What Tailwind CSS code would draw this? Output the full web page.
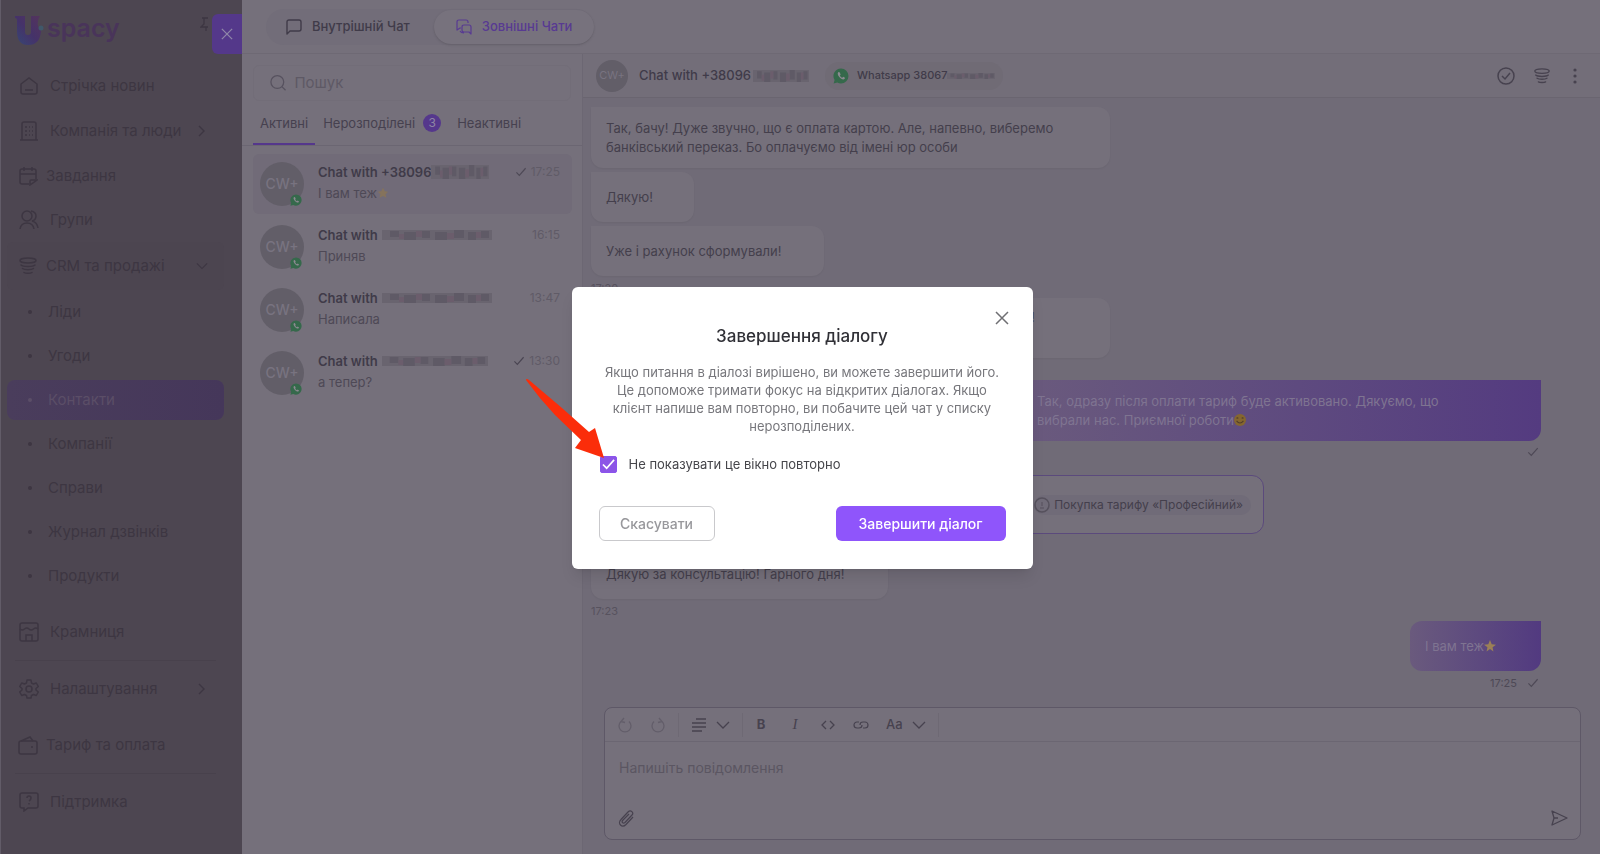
<!DOCTYPE html>
<html lang="uk">
<head>
    <meta charset="UTF-8">
    <meta name="viewport" content="width=device-width, initial-scale=1.0">
    <title>Uspacy - Зовнішні чати</title>
    <script src="https://cdn.jsdelivr.net/npm/@tailwindcss/browser@4"></script>
</head>
<body class="bg-[#75707b] text-[#403b49] font-['Inter','Noto_Sans',sans-serif] text-sm">
    <!-- Icon sprite -->
    <svg class="hidden">
        <symbol id="i-check" viewBox="0 0 14 12"><path d="M1.5 6.5 5 10 12.500 1.500" fill="none" stroke="currentColor" stroke-width="1.4"/></symbol>
        <symbol id="i-right" viewBox="0 0 12 16"><path d="M3 3l5 5-5 5" fill="none" stroke="currentColor" stroke-width="1.4"/></symbol>
        <symbol id="i-down" viewBox="0 0 14 10"><path d="M1 2l6 6 6-6" fill="none" stroke="currentColor" stroke-width="1.3"/></symbol>
        <symbol id="i-x" viewBox="0 0 14 14"><path d="M1 1l12 12M13 1 1 13" fill="none" stroke="currentColor" stroke-width="1.5"/></symbol>
        <symbol id="i-funnel" viewBox="0 0 20 20"><g fill="none" stroke="currentColor" stroke-width="1.5" stroke-linecap="round"><ellipse cx="10" cy="4.500" rx="8" ry="2.500"/><path d="M3 9c2 2 12 2 14 0M4.500 12.500c2 1.500 9 1.500 11 0M6 16.500c1.500 1 6.500 1 8 0"/></g></symbol>
        <symbol id="i-whatsapp" viewBox="0 0 16 16"><path d="M8 .500a7.500 7.500 0 0 1 0 15c-1.400 0-2.500-.300-3.700-1L.600 15.500l1-3.600A7.500 7.500 0 0 1 8 .500z" fill="#35694b"/><path d="M5.500 4c-1.300 1-1 2.900.800 5 1.900 2.200 4.200 3.300 5.400 1.700.300-.500.300-1-.100-1.200l-1.400-.700-.900.900c-1-.300-2-1.300-2.400-2.300l.700-.900-.700-1.800c-.300-.700-.900-1-1.400-.700z" fill="#8d8a92"/></symbol>
        <symbol id="i-mosaic" viewBox="0 0 110 10" preserveAspectRatio="none"><path fill="#69646f" d="M0 0h110v10H0z"/><path fill="#5f5a66" d="M8 1h9v6H8zM22 2h12v8H22zM40 1h8v7h-8zM53 2h12v8H53zM72 0h10v8H72zM86 2h8v8h-8zM99 1h8v7h-8z"/><path fill="#6b5d6c" d="M17 4h5v5h-5zM34 1h6v6h-6zM65 3h7v6h-7zM94 2h5v6h-5z"/></symbol>
    </svg>

    <div class="flex h-screen min-h-[854px]">
        <!-- Sidebar -->
        <aside class="w-[242px] shrink-0 bg-[#4d4651] text-[#3d3642] border-l border-[#625c68] text-[15px]">
            <div class="flex h-[64px] items-start justify-between">
                <a href="#" class="flex items-center pl-[13px] pt-3">
                    <svg class="h-8 w-8" viewBox="0 0 32 32">
                        <defs><linearGradient id="logo" x1="0" x2="1" y1="1" y2="0"><stop stop-color="#364775"/><stop offset=".5" stop-color="#453269"/><stop offset="1" stop-color="#54345c"/></linearGradient></defs>
                        <path d="M1 2h10v16q0 3 3 3t3-3V2h9q-3 5-2 10l3 5q-1 14-13 14Q3 31 3 17V6Q3 4 1 4z" fill="url(#logo)"/>
                        <circle cx="27" cy="14" r="2.500" fill="#40586a"/>
                    </svg>
                    <span class="pb-1 pl-px text-[25px] leading-8 font-semibold text-[#49345a]">spacy</span>
                </a>
                <div class="flex items-start gap-1">
                    <svg class="mt-4 h-4 w-2" viewBox="0 0 8 16" fill="none" stroke="currentColor" stroke-width="1.3"><path d="M2 2h7M4 2v6l-3 3h8M6 11v4"/></svg>
                    <button aria-label="Закрити" class="mt-[14px] flex h-10 w-[30px] items-center justify-center rounded-l-md bg-[#54388a] text-[#8f86a8]"><svg class="h-3 w-3"><use href="#i-x"/></svg></button>
                </div>
            </div>
            <nav class="flex flex-col pr-[18px] pl-[6px]">
                <a href="#" class="flex h-11 items-center gap-[11px] pl-3">
                    <svg class="h-5 w-5" viewBox="0 0 20 20" fill="none" stroke="currentColor" stroke-width="1.5"><path d="M2 8l8-6 8 6v8q0 2-2 2H4q-2 0-2-2zM6 14h8"/></svg>Стрічка новин</a>
                <a href="#" class="flex h-[46px] items-center gap-[11px] pr-4 pl-3">
                    <svg class="h-5 w-5" viewBox="0 0 20 20" fill="none" stroke="currentColor" stroke-width="1.5"><path d="M1 19h18M3 19V3q0-2 2-2h10q2 0 2 2v16M6 6h2m2 0h1m2 0h1M6 10h2m2 0h1m2 0h1M6 14h2m2 0h1m2 0h1"/></svg>
                    <span class="flex-1">Компанія та люди</span><svg class="h-4 w-3"><use href="#i-right"/></svg></a>
                <a href="#" class="flex h-11 items-center gap-2 pl-[11px]">
                    <svg class="h-5 w-5" viewBox="0 0 20 20" fill="none" stroke="currentColor" stroke-width="1.5"><path d="M11 18H4q-2 0-2-2V5q0-2 2-2h12q2 0 2 2v8M2 8h16M6 1v4m8-4v4M12 19v-4q0-1 1-1h6z"/></svg>Завдання</a>
                <a href="#" class="flex h-11 items-center gap-[11px] pl-3">
                    <svg class="h-5 w-5" viewBox="0 0 20 20" fill="none" stroke="currentColor" stroke-width="1.5"><circle cx="8" cy="6" r="5"/><path d="M1 19q1-6 7-6t7 6M12 1q5 1 5 5t-4 5q5 1 6 7"/></svg>Групи</a>
                <a href="#" class="flex h-12 items-center gap-2 rounded-md bg-[#4c4550] pr-4 pl-[11px]">
                    <svg class="h-5 w-5"><use href="#i-funnel"/></svg><span class="flex-1">CRM та продажі</span><svg class="h-2.5 w-3"><use href="#i-down"/></svg></a>
                <a href="#" class="flex h-11 items-center gap-4 pl-[21px]"><span class="h-1 w-1 rounded-full bg-current"></span>Ліди</a>
                <a href="#" class="flex h-11 items-center gap-4 pl-[21px]"><span class="h-1 w-1 rounded-full bg-current"></span>Угоди</a>
                <a href="#" class="my-0.5 flex h-10 items-center gap-4 rounded-lg bg-linear-to-r from-[#4a3d5c] to-[#45375a] pl-[21px] text-[#5b4e67]"><span class="h-1 w-1 rounded-full bg-current"></span>Контакти</a>
                <a href="#" class="flex h-11 items-center gap-4 pl-[21px]"><span class="h-1 w-1 rounded-full bg-current"></span>Компанії</a>
                <a href="#" class="flex h-11 items-center gap-4 pl-[21px]"><span class="h-1 w-1 rounded-full bg-current"></span>Справи</a>
                <a href="#" class="flex h-11 items-center gap-4 pl-[21px]"><span class="h-1 w-1 rounded-full bg-current"></span>Журнал дзвінків</a>
                <a href="#" class="flex h-11 items-center gap-4 pl-[21px]"><span class="h-1 w-1 rounded-full bg-current"></span>Продукти</a>
                <a href="#" class="mt-1.5 flex h-14 items-center gap-[11px] pl-3">
                    <svg class="h-5 w-5" viewBox="0 0 20 20" fill="none" stroke="currentColor" stroke-width="1.5"><rect x="1" y="1" width="18" height="18" rx="2"/><path d="M1 7q2 2 4.500 0t4.500 0 4.500 0 4.500 0M7 19v-6h6v6"/></svg>Крамниця</a>
                <div class="mx-2 border-t border-[#48414c]"></div>
                <a href="#" class="flex h-14 items-center gap-[11px] pr-4 pl-3">
                    <svg class="h-5 w-5" viewBox="0 0 20 20" fill="none" stroke="currentColor" stroke-width="1.5" stroke-linejoin="round"><path d="M8 1h4l.5 3 2 1 2.800-1 2 3.500L17 9.500v1.500l2.300 2-2 3.500-2.800-1-2 1L12 19H8l-.5-2.500-2-1-2.800 1-2-3.500L3 11V9.500L.700 7.500l2-3.500 2.800 1 2-1z"/><circle cx="10" cy="10" r="3"/></svg>
                    <span class="flex-1">Налаштування</span><svg class="h-4 w-3"><use href="#i-right"/></svg></a>
                <a href="#" class="flex h-14 items-center gap-2 pl-[11px]">
                    <svg class="h-5 w-5" viewBox="0 0 20 20" fill="none" stroke="currentColor" stroke-width="1.5"><rect x="1" y="6" width="18" height="13" rx="2"/><path d="M3 6l9-4 3 4M13 12h2"/></svg>Тариф та оплата</a>
                <div class="mx-2 border-t border-[#48414c]"></div>
                <a href="#" class="flex h-14 items-center gap-[11px] pl-3">
                    <svg class="h-5 w-5" viewBox="0 0 20 20" fill="none" stroke="currentColor" stroke-width="1.5"><path d="M3 1h14q2 0 2 2v11q0 2-2 2h-8l-4 3v-3H3q-2 0-2-2V3q0-2 2-2zM8 6q0-2 2-2t2 2-2 3M10 11v1.500"/></svg>Підтримка</a>
            </nav>
        </aside>

        <div class="flex min-w-0 flex-1 flex-col">
            <!-- Chat type switch -->
            <header class="flex h-[54px] shrink-0 items-center border-b border-[#6e6974] pl-6">
                <div class="flex h-9 items-center rounded-full bg-[#726d79] text-[13px] font-medium">
                    <button class="flex items-center gap-[10px] pr-6 pl-5">
                        <svg class="h-4 w-4" viewBox="0 0 16 16" fill="none" stroke="currentColor" stroke-width="1.4" stroke-linejoin="round"><path d="M1 15V3q0-2 2-2h10q2 0 2 2v7q0 2-2 2H4z"/></svg>Внутрішній Чат</button>
                    <button class="flex h-[34px] items-center gap-[10px] rounded-full bg-[#77727d] px-[22px] text-[#583a92] shadow-sm">
                        <svg class="h-4 w-4" viewBox="0 0 16 16" fill="none" stroke="currentColor" stroke-width="1.2" stroke-linejoin="round"><path d="M5 9H4l-3 2V3q0-2 2-2h7q2 0 2 2v1M8 6h5q2 0 2 2v7l-2-2H8q-2 0-2-2V8q0-2 2-2zM4 12q1 2 4 2"/></svg>Зовнішні Чати</button>
                </div>
            </header>

            <div class="flex min-h-0 flex-1">
                <!-- Chat list -->
                <section class="w-[341px] shrink-0 border-r border-[#6c6773]">
                    <label class="mx-[11px] mt-[11px] flex h-9 items-center gap-2 rounded-md border border-[#726d78] px-4 text-[15px] text-[#57525f]">
                        <svg class="h-[18px] w-[18px]" viewBox="0 0 18 18" fill="none" stroke="currentColor" stroke-width="1.4"><circle cx="8" cy="8" r="7"/><path d="M13 13l4 4"/></svg>
                        <input type="search" placeholder="Пошук" aria-label="Пошук" class="w-full bg-transparent outline-none placeholder:text-[#5e5965]">
                    </label>
                    <div class="flex h-[45px] items-stretch border-b border-[#6b6672] pl-[11px] text-[13px] text-[#46414f]">
                        <button class="border-b-2 border-[#55378c] px-[7px] pt-0.5">Активні</button>
                        <button class="flex items-center gap-2 px-2">Нерозподілені<span class="h-[18px] w-[18px] rounded-full bg-[#55378c] text-xs leading-[18px] text-[#8e86a3]">3</span></button>
                        <button class="px-2">Неактивні</button>
                    </div>
                    <ul class="mt-2 pr-[10px] pl-[11px] text-[13px] leading-[21px]">
                        <li class="mb-[3px] flex h-[60px] items-center gap-[14px] rounded-md bg-[#716b78] pr-3 pl-[7px]">
                            <div class="relative flex h-11 w-11 items-center justify-center rounded-full bg-[#625e68] text-sm font-medium text-[#787380]">CW+<svg class="absolute right-0.5 bottom-0 h-3 w-3"><use href="#i-whatsapp"/></svg></div>
                            <div class="flex-1 pb-[3px]">
                                <div class="flex items-center font-semibold">Chat with +38096<svg class="h-3.5 w-[58px]"><use href="#i-mosaic"/></svg><span class="ml-auto flex items-center gap-1 text-xs font-normal text-[#605b67]"><svg class="h-2.5 w-3 text-[#4e4956]"><use href="#i-check"/></svg>17:25</span></div>
                                <p class="flex items-center text-[#4e4956]">І вам теж<svg class="h-3 w-3" viewBox="0 0 14 14"><path d="M7 1l2 4 4 .500-3 3 1 4-4-2-4 2 1-4-3-3L5 5z" fill="#85735c"/></svg></p>
                            </div>
                        </li>
                        <li class="mb-[3px] flex h-[60px] items-center gap-[14px] pr-3 pl-[7px]">
                            <div class="relative flex h-11 w-11 items-center justify-center rounded-full bg-[#625e68] text-sm font-medium text-[#787380]">CW+<svg class="absolute right-0.5 bottom-0 h-3 w-3"><use href="#i-whatsapp"/></svg></div>
                            <div class="flex-1 pb-[3px]">
                                <div class="flex items-center gap-1 font-semibold">Chat with <svg class="h-2.5 w-[110px]"><use href="#i-mosaic"/></svg><span class="ml-auto text-xs font-normal text-[#605b67]">16:15</span></div>
                                <p class="text-[#4e4956]">Приняв</p>
                            </div>
                        </li>
                        <li class="mb-[3px] flex h-[60px] items-center gap-[14px] pr-3 pl-[7px]">
                            <div class="relative flex h-11 w-11 items-center justify-center rounded-full bg-[#625e68] text-sm font-medium text-[#787380]">CW+<svg class="absolute right-0.5 bottom-0 h-3 w-3"><use href="#i-whatsapp"/></svg></div>
                            <div class="flex-1 pb-[3px]">
                                <div class="flex items-center gap-1 font-semibold">Chat with <svg class="h-2.5 w-[110px]"><use href="#i-mosaic"/></svg><span class="ml-auto text-xs font-normal text-[#605b67]">13:47</span></div>
                                <p class="text-[#4e4956]">Написала</p>
                            </div>
                        </li>
                        <li class="flex h-[60px] items-center gap-[14px] pr-3 pl-[7px]">
                            <div class="relative flex h-11 w-11 items-center justify-center rounded-full bg-[#625e68] text-sm font-medium text-[#787380]">CW+<svg class="absolute right-0.5 bottom-0 h-3 w-3"><use href="#i-whatsapp"/></svg></div>
                            <div class="flex-1 pb-[3px]">
                                <div class="flex items-center gap-1 font-semibold">Chat with <svg class="h-2.5 w-[106px]"><use href="#i-mosaic"/></svg><span class="ml-auto flex items-center gap-1 text-xs font-normal text-[#605b67]"><svg class="h-2.5 w-3 text-[#4a4552]"><use href="#i-check"/></svg>13:30</span></div>
                                <p class="text-[#4e4956]">а тепер?</p>
                            </div>
                        </li>
                    </ul>
                </section>

                <!-- Conversation -->
                <main class="flex min-w-0 flex-1 flex-col bg-[#706b77]">
                    <div class="flex h-[44px] shrink-0 items-center border-b border-[#6a6570] bg-[#736e79] pr-[19px] pl-[13px]">
                        <div class="flex h-8 w-8 items-center justify-center rounded-full bg-[#625e68] text-[11px] text-[#787380]">CW+</div>
                        <h1 class="ml-[11px] text-[13px] font-medium">Chat with +38096</h1>
                        <svg class="ml-0.5 h-3 w-[56px]"><use href="#i-mosaic"/></svg>
                        <div class="ml-4 flex h-7 items-center rounded-full bg-[#706b75] pr-2 pl-2 text-[11px] font-medium">
                            <svg class="mr-2 h-4 w-4"><use href="#i-whatsapp"/></svg>Whatsapp 38067<svg class="h-1.5 w-12"><use href="#i-mosaic"/></svg>
                        </div>
                        <div class="ml-auto flex items-center gap-[18px] text-[#47424f]">
                            <button aria-label="Завершити"><svg class="block h-[18px] w-[18px]" viewBox="0 0 18 18" fill="none" stroke="currentColor" stroke-width="1.5"><circle cx="9" cy="9" r="8"/><path d="M5 9l3 3 5-6"/></svg></button>
                            <button aria-label="Воронка"><svg class="block h-[18px] w-[18px]"><use href="#i-funnel"/></svg></button>
                            <button aria-label="Меню"><svg class="block h-[18px] w-3" viewBox="0 0 12 18" fill="currentColor"><circle cx="6" cy="3" r="1.600"/><circle cx="6" cy="9" r="1.600"/><circle cx="6" cy="15" r="1.600"/></svg></button>
                        </div>
                    </div>

                    <div class="flex min-h-0 flex-1 flex-col items-start pt-[9px] pr-[59px] pl-2 text-[13px] leading-[19px] text-[#443f4c]">
                        <div class="flex h-[61px] w-[519px] items-center rounded-xl rounded-tl-none bg-[#75707b] px-[15px] shadow-xs"><p>Так, бачу! Дуже звучно, що є оплата картою. Але, напевно, виберемо банківський переказ. Бо оплачуємо від імені юр особи</p></div>
                        <div class="mt-1 flex h-[50px] w-[103px] items-center rounded-xl rounded-tl-none bg-[#75707b] px-[15px] shadow-xs">Дякую!</div>
                        <div class="mt-1 flex h-[50px] w-[233px] items-center rounded-xl rounded-tl-none bg-[#75707b] px-[15px] shadow-xs">Уже і рахунок сформували!</div>
                        <time class="h-[22px] text-[11px] leading-6 text-[#57525e]">17:20</time>
                        <div class="flex h-[60px] w-[519px] rounded-xl rounded-tl-none bg-[#75707b] pt-[10px] pl-[440px] shadow-xs">!</div>
                        <div class="mt-[22px] flex h-[61px] w-[519px] items-center self-end rounded-xl rounded-tr-none bg-linear-to-r from-[#6a5a7d] to-[#543b80] pr-20 pl-[15px] text-[#7f7491]">
                            <p>Так, одразу після оплати тариф буде активовано. Дякуємо, що вибрали нас. Приємної роботи<svg class="inline-block h-3 w-3 align-[-1px]" viewBox="0 0 14 14"><circle cx="7" cy="7" r="7" fill="#85662f"/><path d="M3 5q1-1 2 0m4 0q1-1 2 0M3 8q4 5 8 0" fill="none" stroke="#503d2c" stroke-width="1.3"/></svg></p>
                        </div>
                        <svg class="mt-1 mr-[2px] h-3.5 w-3 self-end text-[#4e4956]"><use href="#i-check"/></svg>
                        <div class="mt-4 ml-[150px] flex h-[59px] w-[523px] items-center justify-end rounded-xl border border-[#5b4a7c] bg-[#75707b] pr-3">
                            <span class="flex h-5 items-center gap-1 rounded-full bg-[#706b78] pr-2 text-xs"><svg class="h-4 w-4" viewBox="0 0 16 16"><circle cx="8" cy="8" r="7" fill="none" stroke="#56515d" stroke-width="1.500"/><path d="M6 11h4M8 5v4" stroke="#56515d"/></svg>Покупка тарифу «Професійний»</span>
                        </div>
                        <div class="mt-4 flex h-[49px] w-[297px] items-center rounded-xl rounded-tl-none bg-[#75707b] px-[15px] shadow-xs">Дякую за консультацію! Гарного дня!</div>
                        <time class="h-[22px] text-[11px] leading-6 text-[#57525e]">17:23</time>
                        <div class="flex h-[50px] w-[131px] items-center self-end rounded-xl rounded-tr-none bg-linear-to-r from-[#6a5a7d] to-[#523a80] px-[15px] text-[#7f7491]">І вам теж<svg class="h-3 w-3" viewBox="0 0 14 14"><path d="M7 0l2 5 5 .500-4 3 1 5-4-3-4 3 1-5-4-3L5 5z" fill="#9b8056"/></svg></div>
                        <div class="flex h-6 items-center gap-[10px] self-end pr-[2px] text-[11px] text-[#4e4956]"><time>17:25</time><svg class="h-2.5 w-3"><use href="#i-check"/></svg></div>
                    </div>

                    <!-- Message editor -->
                    <form class="mr-[19px] mb-[14px] ml-[21px] flex h-[133px] shrink-0 flex-col rounded-lg border border-[#5e5867] bg-[#75707b] text-[#47424f]">
                        <div class="flex h-[34px] shrink-0 items-center border-b border-[#6b6672]">
                            <div class="flex h-6 items-center gap-[17px] border-r border-[#6e6974] pr-3 pl-3 text-[#635e6a]">
                                <button type="button" aria-label="Скасувати дію"><svg class="block h-4 w-4" viewBox="0 0 16 16" fill="none" stroke="currentColor" stroke-width="1.300"><path d="M4 4.500a6 6 0 1 0 8 0M7 1 4 4.500l4 1"/></svg></button>
                                <button type="button" aria-label="Повторити дію"><svg class="block h-4 w-4" viewBox="0 0 16 16" fill="none" stroke="currentColor" stroke-width="1.300"><path d="M12 4.500a6 6 0 1 1-8 0M9 1l3 3.500-4 1"/></svg></button>
                            </div>
                            <button type="button" aria-label="Вирівнювання" class="flex h-6 items-center gap-[9px] border-r border-[#6e6974] px-3"><svg class="h-4 w-4" viewBox="0 0 16 16" stroke="currentColor" stroke-width="1.500"><path d="M5 2h10M1 6h14M1 10h14M1 14h10"/></svg><svg class="h-2.5 w-3.5"><use href="#i-down"/></svg></button>
                            <div class="flex h-6 items-center border-r border-[#6e6974] pr-3 pl-3">
                                <button type="button" class="w-3 text-[13px] font-bold">B</button>
                                <button type="button" class="ml-[22px] w-3 font-['Liberation_Serif',serif] text-[15px] italic">I</button>
                                <button type="button" aria-label="Код" class="ml-[19px]"><svg class="block h-3 w-4" viewBox="0 0 16 12" fill="none" stroke="currentColor" stroke-width="1.300"><path d="M6 2 2 6l4 4M10 2l4 4-4 4"/></svg></button>
                                <button type="button" aria-label="Посилання" class="ml-[17px]"><svg class="block h-3 w-4" viewBox="0 0 16 12" fill="none" stroke="currentColor" stroke-width="1.200"><path d="M6 3H4a3 3 0 0 0 0 6h2q3 0 3-3M10 9h2a3 3 0 0 0 0-6h-2Q7 3 7 6"/></svg></button>
                                <button type="button" class="ml-[17px] flex items-center gap-[9px] text-[13px] font-medium">Aa<svg class="h-2.5 w-3.5"><use href="#i-down"/></svg></button>
                            </div>
                        </div>
                        <textarea aria-label="Повідомлення" placeholder="Напишіть повідомлення" class="min-h-0 flex-1 resize-none bg-transparent px-[14px] pt-4 text-sm outline-none placeholder:text-[#5b5662]"></textarea>
                        <div class="flex items-center justify-between px-3 pb-3">
                            <button type="button" aria-label="Прикріпити файл"><svg class="block h-[18px] w-[18px]" viewBox="0 0 18 18" fill="none" stroke="currentColor" stroke-width="1.200"><path d="M16 8l-7 7.500c-4 4-9-1-5-5L11 3c3-3 6 1 4 3l-7 7.500c-2 1.500-4-.500-2-2.500l6-6"/></svg></button>
                            <button type="button" aria-label="Надіслати"><svg class="block h-[18px] w-[18px]" viewBox="0 0 18 18" fill="none" stroke="currentColor" stroke-width="1.300" stroke-linejoin="round"><path d="M2 2l15 7L2 16l2-7zM4 9h4"/></svg></button>
                        </div>
                    </form>
                </main>
            </div>
        </div>
    </div>

    <!-- Finish dialog modal -->
    <div class="fixed inset-0 flex items-center justify-center pt-0.5 pl-1">
        <div role="dialog" aria-labelledby="dialogTitle" class="relative w-[461px] rounded-md bg-white px-[27px] pt-[37px] pb-7 shadow-lg">
            <button aria-label="Закрити вікно" class="absolute top-6 right-6 text-[#6f6f73]"><svg class="block h-3.5 w-3.5"><use href="#i-x"/></svg></button>
            <h2 id="dialogTitle" class="text-center text-[17px] leading-6 font-medium text-[#303036]">Завершення діалогу</h2>
            <p class="mt-[15px] text-center text-[13px] leading-[18px] text-[#77777c]">Якщо питання в діалозі вирішено, ви можете завершити його. Це допоможе тримати фокус на відкритих діалогах. Якщо клієнт напише вам повторно, ви побачите цей чат у списку нерозподілених.</p>
            <label class="mt-5 flex items-center gap-3 pl-px text-[13px] leading-[18px] text-[#46464b]">
                <span class="relative h-[17px] w-[17px]">
                    <input type="checkbox" checked class="block h-full w-full appearance-none rounded-xs border border-[#8b54ee] checked:bg-[#8c55e6]">
                    <svg class="pointer-events-none absolute inset-0.5 h-[13px] w-[13px] text-white" viewBox="0 0 14 14" fill="none" stroke="currentColor" stroke-width="1.800"><path d="M1 7l4 4 8-9"/></svg>
                </span>
                Не показувати це вікно повторно
            </label>
            <div class="mt-[33px] flex justify-between text-sm font-medium">
                <button class="h-[35px] w-[116px] rounded-md border border-[#c9c9cc] text-[#98989c]">Скасувати</button>
                <button class="h-[35px] w-[170px] rounded-md bg-[#8f55fb] text-white">Завершити діалог</button>
            </div>
            <!-- Pointer to the checkbox -->
            <svg class="absolute top-[91px] -left-[47px] h-20 w-20" viewBox="0 0 80 80"><path d="M1 2Q1 0 4 2l33 28 27 24 6-4 9 30-29-10 6-8L30 37Q14 20 1 2z" fill="#fb2d0a"/></svg>
        </div>
    </div>
</body>
</html>
